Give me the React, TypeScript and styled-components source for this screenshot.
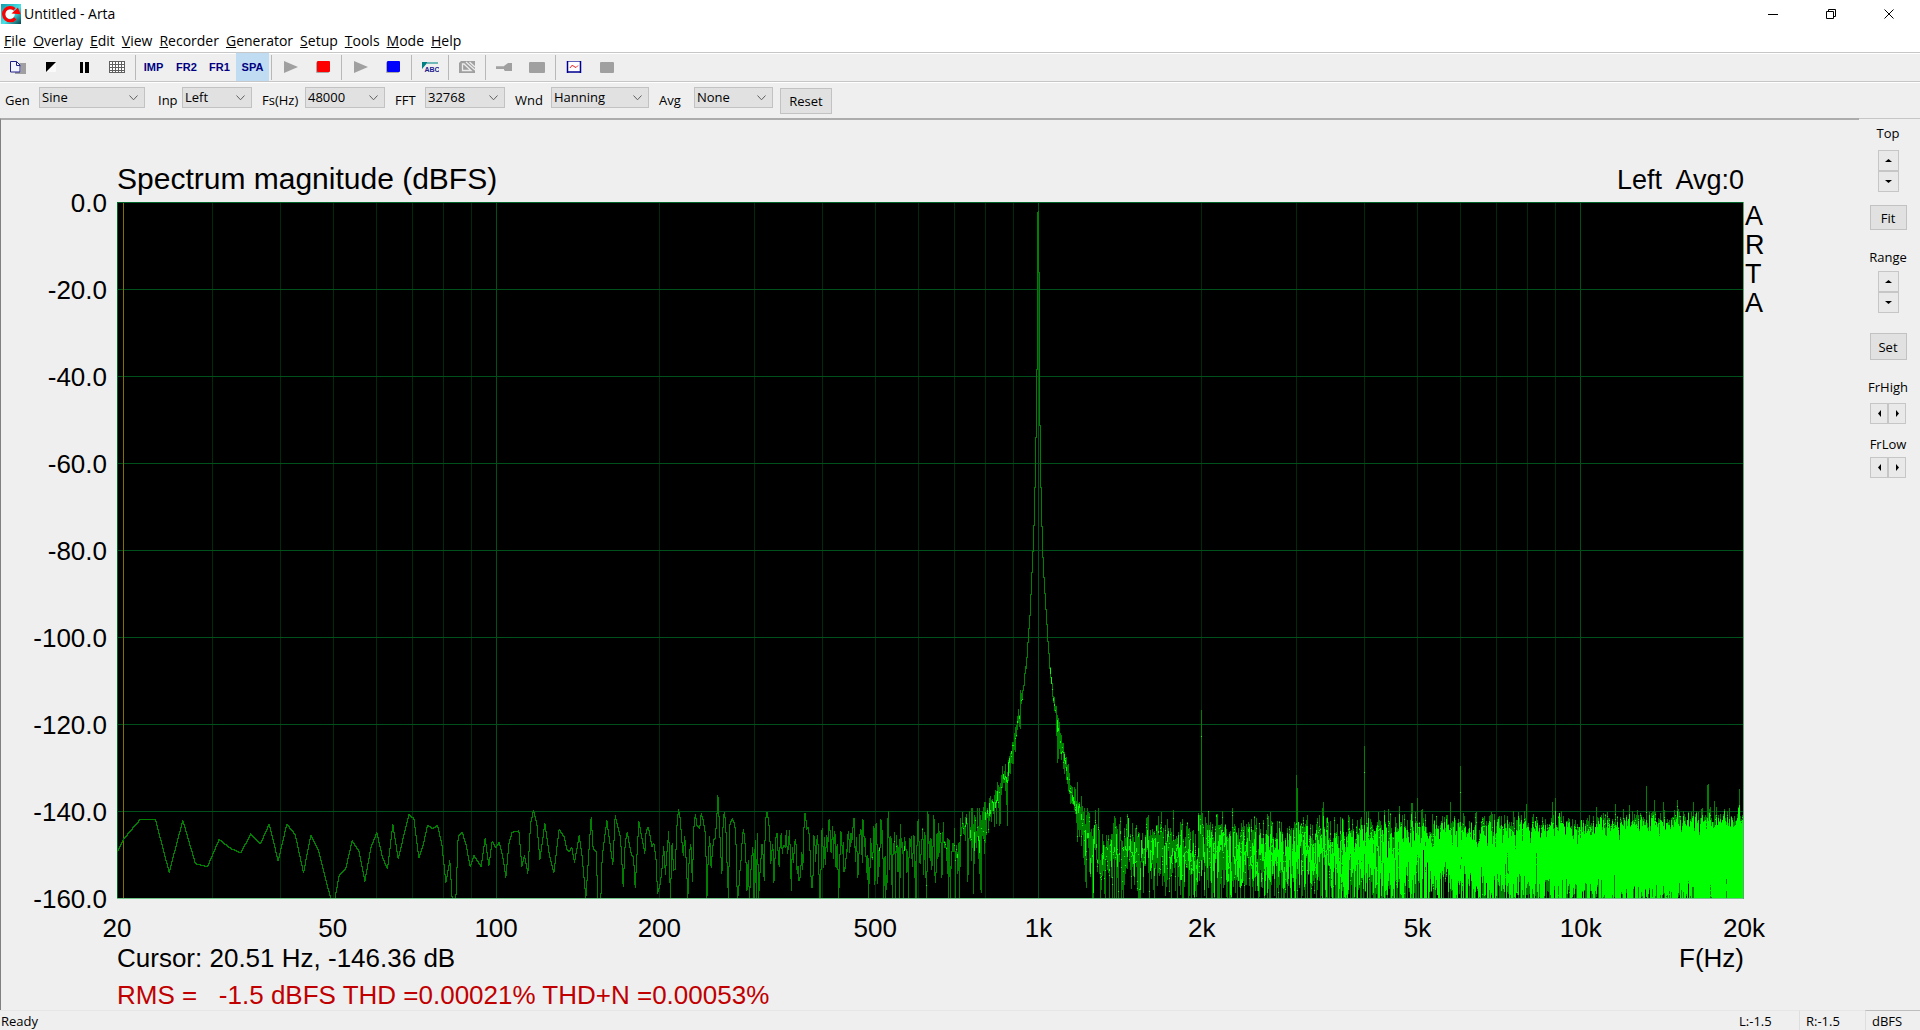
import React, { useMemo } from "react";
import styled, { createGlobalStyle } from "styled-components";

const GlobalStyle = createGlobalStyle`
  * { box-sizing: border-box; }
  html, body { margin: 0; padding: 0; }
  body {
    background: #efefef;
    color: #000;
    font-family: "Open Sans", "Noto Sans", sans-serif;
    font-size: 14px;
  }
  button, select { font: inherit; color: inherit; }
`;

/* ---------- window frame ---------- */

const Window = styled.div`
  display: flex;
  flex-direction: column;
  min-height: 100vh;
`;

const TitleBar = styled.header`
  display: flex;
  align-items: flex-start;
  justify-content: space-between;
  height: 30px;
  padding-right: 2px;
  background: #fff;
`;

const Caption = styled.h1`
  display: flex;
  align-items: center;
  gap: 3px;
  margin: 0;
  padding: 4px 0 0 1px;
  font-size: 14px;
  line-height: 20px;
  font-weight: 400;
`;

const WindowButtons = styled.div`
  display: flex;
`;

const WindowButton = styled.button`
  display: grid;
  place-items: center;
  width: 58px;
  height: 27px;
  padding: 0;
  border: 0;
  background: transparent;
`;

const MenuBar = styled.nav`
  display: flex;
  gap: 7px;
  height: 22px;
  padding-left: 4px;
  background: #fff;
`;

const MenuItem = styled.button`
  padding: 0;
  border: 0;
  background: transparent;
  font-size: 14px;
  line-height: 22px;

  &::first-letter { text-decoration: underline; }
`;

/* ---------- toolbars ---------- */

const ToolBar = styled.div`
  display: flex;
  height: 30px;
  padding-left: 1px;
  border-top: 1px solid #c6c6c6;
  border-bottom: 1px solid #c6c6c6;
  box-shadow: inset 0 1px 0 #fff, 0 1px 0 #fff;
`;

const ToolButton = styled.button<{ $active?: boolean }>`
  display: grid;
  place-items: center;
  width: 33px;
  padding: 0;
  border: 0;
  background: ${(p) => (p.$active ? "#bfdcf3" : "transparent")};
  color: #000080;
  font-family: "Liberation Sans", Arial, sans-serif;
  font-size: 11px;
  font-weight: 700;
`;

const ToolSeparator = styled.span`
  width: 1px;
  margin: 2px 1px 1px 2px;
  background: #b8b8b8;
`;

const SettingsBar = styled.form`
  display: flex;
  align-items: flex-start;
  height: 36px;
  padding-top: 5px;
`;

const FieldLabel = styled.label<{ $width: number; $inset?: number }>`
  width: ${(p) => p.$width}px;
  padding-top: 3px;
  padding-left: ${(p) => p.$inset ?? 10}px;
  font-size: 13px;
  line-height: 20px;
  white-space: nowrap;
`;

const SelectBox = styled.span<{ $width: number }>`
  position: relative;
  width: ${(p) => p.$width}px;
  height: 21px;

  svg {
    position: absolute;
    right: 7px;
    top: 8px;
    pointer-events: none;
  }
`;

const Select = styled.select`
  appearance: none;
  display: block;
  width: 100%;
  height: 21px;
  padding: 0 18px 0 2px;
  border: 1px solid #c2c2c2;
  border-radius: 0;
  background: #e1e1e1;
  font-size: 13px;
  line-height: 19px;
`;

const PushButton = styled.button<{ $width: number; $height: number }>`
  width: ${(p) => p.$width}px;
  height: ${(p) => p.$height}px;
  padding: 0;
  border: 1px solid #c2c2c2;
  background: #e1e1e1;
  font-size: 13px;
`;

const ResetButton = styled(PushButton)`
  margin: 1px 0 0 7px;
`;

/* ---------- body ---------- */

const Body = styled.main`
  display: flex;
  flex: 1;
`;

const View = styled.section`
  display: grid;
  flex: 1;
  grid-template-columns: 116px minmax(0, 1fr) 115px;
  grid-template-rows: 82px minmax(0, 1fr) 44px 30px 37px;
  border-top: 2px solid #acacac;
  border-left: 1px solid #808080;
  font-family: "Liberation Sans", Arial, sans-serif;
  font-size: 26px;
  line-height: 30px;
`;

const ChartHeader = styled.div`
  display: flex;
  grid-column: 2;
  align-items: flex-end;
  justify-content: space-between;
  padding-bottom: 7px;
  font-size: 27px;
  line-height: 30px;
  white-space: pre;
`;

const ChartTitle = styled.h2`
  margin: 0;
  font-size: 30px;
  line-height: 32px;
  font-weight: 400;
`;

const LevelAxis = styled.div`
  display: flex;
  flex-direction: column;
  grid-column: 1;
  grid-row: 2;
  justify-content: space-between;
  padding-right: 10px;
  text-align: right;
`;

const LevelTick = styled.span`
  display: flex;
  align-items: center;
  justify-content: flex-end;
  height: 1px;
`;

const Plot = styled.svg`
  display: block;
  grid-column: 2;
  grid-row: 2;
  width: 100%;
  height: 100%;
  background: #000;
`;

const Brand = styled.div`
  grid-column: 3;
  grid-row: 2;
  width: 24px;
  padding-left: 1px;
  font-size: 27px;
  line-height: 29px;
  word-break: break-all;
`;

const FrequencyAxis = styled.div`
  display: flex;
  grid-column: 2;
  grid-row: 3;
  padding-top: 14px;
`;

const FrequencyTick = styled.span`
  display: flex;
  justify-content: center;
  width: 0;
`;

const Readout = styled.div`
  display: flex;
  grid-column: 2;
  grid-row: 4;
  justify-content: space-between;
`;

const Distortion = styled.div`
  grid-column: 2 / 4;
  grid-row: 5;
  padding-top: 7px;
  color: #c00000;
  white-space: pre;
`;

/* ---------- side panel ---------- */

const SidePanel = styled.aside`
  display: flex;
  flex-direction: column;
  align-items: center;
  width: 61px;
  padding-top: 4px;
  padding-right: 3px;
  border-top: 1px solid #c6c6c6;
  font-size: 13px;
`;

const PanelLabel = styled.span<{ $space: number }>`
  margin-top: ${(p) => p.$space}px;
  line-height: 20px;
`;

const Spinner = styled.div<{ $row?: boolean; $space: number }>`
  display: flex;
  flex-direction: ${(p) => (p.$row ? "row" : "column")};
  margin-top: ${(p) => p.$space}px;
`;

const SpinButton = styled.button<{ $width: number }>`
  display: grid;
  place-items: center;
  width: ${(p) => p.$width}px;
  height: 21px;
  padding: 0;
  border: 1px solid #c6c6c6;
  background: #e9e9e9;
`;

const PanelButton = styled(PushButton)<{ $space: number }>`
  margin-top: ${(p) => p.$space}px;
`;

/* ---------- status bar ---------- */

const StatusBar = styled.footer`
  display: flex;
  height: 20px;
  font-size: 13px;
  line-height: 21px;
`;

const StatusCell = styled.span<{ $width?: number; $strong?: boolean; $rule?: boolean }>`
  flex: ${(p) => (p.$width ? `0 0 ${p.$width}px` : "1")};
  padding-left: ${(p) => (p.$width ? 6 : 1)}px;
  border-top: 1px solid ${(p) => (p.$strong ? "#bdbdbd" : "#e6e6e6")};
  border-left: ${(p) => (p.$rule ? "1px solid #dedede" : "0")};
`;

/* ---------- spectrum ---------- */

const PLOT_W = 1627;
const PLOT_H = 697;
const DECADE = 542;
const BIN_HZ = 48000 / 32768;

const xOf = (hz: number) => DECADE * Math.log10(hz / 20);
const yOf = (db: number) => (-db * (PLOT_H - 1)) / 160;

/* Low end of the trace, in thirds of a pixel, y counted from 598 px. */
const LOW_TRACE: [number, number][] = [
  [0, 152], [20, 114], [67, 58], [114, 58], [155, 215], [196, 60], [234, 190], [270, 199], [305, 117], [340, 144],
  [370, 157], [400, 100], [429, 130], [455, 71], [482, 181], [508, 71], [533, 102], [558, 217], [580, 104], [602, 147],
  [640, 296], [652, 296], [665, 225], [684, 207], [704, 121], [724, 152], [742, 242], [760, 142], [778, 97],
  [795, 170], [810, 205], [826, 72], [842, 175], [874, 43], [889, 54], [904, 172], [918, 130], [930, 75], [946, 84],
  [960, 75], [973, 130], [985, 246], [997, 180], [1004, 296], [1015, 296], [1022, 106], [1034, 95], [1046, 135],
  [1058, 198], [1069, 165], [1091, 198], [1103, 115], [1114, 196], [1124, 122], [1135, 141], [1145, 125], [1156, 170],
  [1165, 230], [1174, 130], [1184, 95], [1204, 91], [1213, 198], [1221, 165], [1231, 218], [1239, 70], [1248, 30],
  [1258, 70], [1267, 178], [1282, 70], [1295, 160], [1309, 216], [1325, 87], [1340, 110], [1348, 145], [1355, 152],
  [1363, 142], [1371, 185], [1385, 106], [1394, 170], [1405, 292], [1421, 50], [1427, 145], [1436, 155], [1441, 296],
  [1450, 296], [1454, 170], [1468, 60], [1486, 192], [1493, 46], [1509, 110], [1517, 258], [1523, 130], [1529, 95],
  [1542, 165], [1548, 168], [1553, 262], [1564, 64], [1582, 158], [1586, 90], [1593, 80], [1603, 138], [1609, 128],
  [1616, 180], [1620, 280],
];

/* Skirt of the fundamental: pixel distance from the carrier, level in dB. */
const SKIRT: [number, number][] = [
  [-80, -160], [-60, -146], [-50, -141], [-40, -136], [-32, -131], [-28, -128.5], [-25, -126], [-23, -123],
  [-20.5, -120.5], [-18, -117], [-15, -112], [-12.5, -106.5], [-11, -103], [-9.5, -98.5], [-8, -94], [-7, -88],
  [-5.7, -82], [-5, -78.5], [-4, -72], [-3, -62], [-2, -50], [-1.2, -36], [-0.6, -3], [0, -1.5], [0.6, -8],
  [1, -38], [2, -58], [3, -69.5], [4, -77], [5, -84], [6, -87.5], [7, -91], [8, -95], [9, -98], [10, -102.5],
  [12, -108], [15, -113.5], [18, -118.5], [21, -122], [26, -128], [31, -133], [36, -137.5], [43, -143], [58, -160],
];

const TONES: [number, number][] = [
  [257, -136.4], [2000, -116.8], [3000, -131.7], [4000, -125], [5000, -137], [6000, -129.7], [5750, -138],
  [7940, -138.5], [8880, -138], [9000, -137], [10720, -139], [13220, -134.3], [13700, -137.5], [14220, -138],
  [16200, -138], [17200, -133.8], [17700, -137.6], [19700, -135],
];

function skirtLevel(dx: number): number {
  if (dx <= SKIRT[0][0] || dx >= SKIRT[SKIRT.length - 1][0]) return -200;
  for (let i = 1; i < SKIRT.length; i++) {
    const [x1, a] = SKIRT[i - 1];
    const [x2, b] = SKIRT[i];
    if (dx <= x2) return a + ((b - a) * (dx - x1)) / (x2 - x1);
  }
  return -200;
}

function makeRandom(seed: number) {
  let s = seed;
  return () => {
    s = (s + 0x6d2b79f5) | 0;
    let t = Math.imul(s ^ (s >>> 15), 1 | s);
    t = (t + Math.imul(t ^ (t >>> 7), 61 | t)) ^ t;
    return ((t ^ (t >>> 14)) >>> 0) / 4294967296;
  };
}

function buildPoints(): [number, number][] {
  const random = makeRandom(20480);
  const gauss = () => Math.sqrt(-2 * Math.log(random() + 1e-12)) * Math.cos(2 * Math.PI * random());
  const pts: [number, number][] = LOW_TRACE.map(([x, y]) => [x / 3, 598 + y / 3]);
  const first = 137;
  const last = Math.floor(20000 / BIN_HZ) + 1;
  const re: number[] = [];
  const im: number[] = [];
  for (let i = 0; i <= last + 2; i++) {
    re.push(gauss());
    im.push(gauss());
  }
  const noise = Math.pow(10, -147.6 / 20) / Math.sqrt(3);
  const carrier = xOf(1000);
  for (let k = first; k <= last; k++) {
    const hz = k * BIN_HZ;
    const nr = (re[k] - 0.5 * (re[k - 1] + re[k + 1])) * noise;
    const ni = (im[k] - 0.5 * (im[k - 1] + im[k + 1])) * noise;
    const x = xOf(hz);
    const level = skirtLevel(x - carrier);
    const skirt = Math.pow(10, level / 20);
    const jitter = level < -116 ? 1 + 0.24 * gauss() : level < -100 ? 1 + 0.08 * gauss() : 1;
    let db = 20 * Math.log10(Math.hypot(nr + skirt * jitter, ni) + 1e-12);
    for (const [f, peak] of TONES) {
      const offset = Math.abs(hz - f) / BIN_HZ;
      if (offset <= 0.5) db = peak;
      else if (offset <= 1.5) db = Math.max(db, peak - 6);
    }
    pts.push([x, yOf(Math.max(db, -160))]);
  }
  return pts;
}

/* Rasterises the trace column by column; pixels crossed often enough turn bright. */
function buildTrace() {
  const hits = new Uint16Array(PLOT_W * PLOT_H);
  const pts = buildPoints();
  for (let i = 1; i < pts.length; i++) {
    const [x1, y1] = pts[i - 1];
    const [x2, y2] = pts[i];
    const c1 = Math.max(0, Math.round(x1));
    const c2 = Math.min(PLOT_W - 1, Math.round(x2));
    for (let c = c1; c <= c2; c++) {
      const from = Math.max(x1, c - 0.5);
      const to = Math.min(x2, c + 0.5);
      const span = x2 - x1 || 1;
      const ya = y1 + ((y2 - y1) * (from - x1)) / span;
      const yb = y1 + ((y2 - y1) * (to - x1)) / span;
      const lo = Math.max(0, Math.round(Math.min(ya, yb)));
      const hi = Math.min(PLOT_H - 1, Math.round(Math.max(ya, yb)));
      for (let y = lo; y <= hi; y++) hits[c * PLOT_H + y] += 1;
    }
  }
  let dim = "";
  let bright = "";
  for (let c = 0; c < PLOT_W; c++) {
    let start = 0;
    let state = 0;
    for (let y = 0; y <= PLOT_H; y++) {
      const n = y < PLOT_H ? hits[c * PLOT_H + y] : 0;
      const next = n === 0 ? 0 : n < 3 ? 1 : 2;
      if (next !== state) {
        const piece = `M${c} ${start}h1V${y}h-1z`;
        if (state === 1) dim += piece;
        if (state === 2) bright += piece;
        start = y;
        state = next;
      }
    }
  }
  return { dim, bright };
}

const GRID_HZ = [
  30, 40, 50, 60, 70, 80, 90, 100, 200, 300, 400, 500, 600, 700, 800, 900, 1000, 2000, 3000, 4000, 5000, 6000, 7000,
  8000, 9000, 10000,
];
const MAJOR_HZ = [100, 1000, 10000];
const GRID_DB = [-20, -40, -60, -80, -100, -120, -140];

function SpectrumPlot() {
  const { dim, bright } = useMemo(buildTrace, []);
  return (
    <Plot
      viewBox={`0 0 ${PLOT_W} ${PLOT_H}`}
      preserveAspectRatio="none"
      shapeRendering="crispEdges"
      role="img"
      aria-label="Spectrum magnitude"
    >
      {GRID_HZ.map((hz) => (
        <rect
          key={hz}
          x={Math.round(xOf(hz))}
          y={0}
          width={1}
          height={PLOT_H}
          fill={MAJOR_HZ.includes(hz) ? "#00501c" : "#002a0e"}
        />
      ))}
      {GRID_DB.map((db) => (
        <rect key={db} x={0} y={Math.round(yOf(db))} width={PLOT_W} height={1} fill="#00501c" />
      ))}
      <rect x={6} y={0} width={1} height={PLOT_H} fill="#807000" />
      <rect x={0} y={0} width={PLOT_W} height={1} fill="#006428" />
      <rect x={0} y={0} width={1} height={PLOT_H} fill="#006428" />
      <path d={dim} fill="#008000" />
      <path d={bright} fill="#00ff00" />
      <rect x={0} y={PLOT_H - 1} width={PLOT_W} height={1} fill="#70c488" />
      <rect x={PLOT_W - 1} y={0} width={1} height={PLOT_H} fill="#58a870" />
    </Plot>
  );
}

/* ---------- icons ---------- */

const AppIcon = () => (
  <svg width="20" height="20" viewBox="0 0 20 20" aria-hidden="true">
    <defs>
      <linearGradient id="appIconFill" x1="0" y1="0" x2="1" y2="1">
        <stop offset="0" stopColor="#109ca8" />
        <stop offset="0.55" stopColor="#48e4ea" />
        <stop offset="1" stopColor="#06434c" />
      </linearGradient>
    </defs>
    <rect width="20" height="20" fill="url(#appIconFill)" />
    <circle cx="9" cy="10" r="4.8" fill="#f4ffff" />
    <path d="M14.3 14.4A6.6 6.6 0 1 1 13.6 5.2" fill="none" stroke="#f00" strokeWidth="3.2" />
    <path d="M10.5 9.6L19.6 10.2L17 3.4z" fill="#f00" />
  </svg>
);

const Chevron = () => (
  <svg width="9" height="6" viewBox="0 0 9 6" aria-hidden="true">
    <path d="M0.5 0.5L4.5 4.8L8.5 0.5" fill="none" stroke="#606060" strokeWidth="1" />
  </svg>
);

const Arrow = ({ dir }: { dir: "up" | "down" | "left" | "right" }) => {
  const shapes = {
    up: "M1 6h7L4.5 3z",
    down: "M1 3h7L4.5 6z",
    left: "M6 1v7L3 4.5z",
    right: "M3 1v7L6 4.5z",
  };
  return (
    <svg width="9" height="9" viewBox="0 0 9 9" aria-hidden="true">
      <path d={shapes[dir]} fill="#000" />
    </svg>
  );
};

const Icon = ({ children }: { children: React.ReactNode }) => (
  <svg width="18" height="14" viewBox="0 0 18 14" aria-hidden="true">
    {children}
  </svg>
);

const CopyIcon = () => (
  <Icon>
    <path d="M10 3h7v11H6v-2h6V7z" fill="#a0a0a0" />
    <path d="M1.5 1.500h6l3.500 3.500v7h-9.500z" fill="#f4f4ff" stroke="#202088" />
    <path d="M7.500 1.500V5.500h3.500" fill="none" stroke="#202088" />
  </Icon>
);
const ContrastIcon = () => (
  <Icon>
    <path d="M14 2v10H4z" fill="#fafafa" />
    <path d="M4 2h10L4 12z" fill="#000" />
  </Icon>
);
const PauseIcon = () => (
  <Icon>
    <path d="M5 2h3v11H5zM10 2h4v11h-4z" fill="#000" />
  </Icon>
);
const GridIcon = () => (
  <Icon>
    <path
      d="M1.5 1.5h15v11h-15zM4.5 1.5v11M7.5 1.5v11M10.5 1.5v11M13.5 1.5v11M1.5 4.5h15M1.5 7.5h15M1.5 10.5h15"
      fill="#fff"
      stroke="#606060"
      shapeRendering="crispEdges"
    />
  </Icon>
);
const PlayIcon = () => (
  <Icon>
    <path d="M3 1l14 6l-14 6z" fill="#a0a0a0" />
  </Icon>
);
const StopIcon = ({ color }: { color: string }) => (
  <Icon>
    <rect x="2" y="2" width="13" height="11" rx="1" fill="#a8a8a8" />
    <rect x="3" y="1" width="13" height="11" rx="1" fill={color} />
  </Icon>
);
const LabelIcon = () => (
  <Icon>
    <path d="M1 2h6L1 9z" fill="#008080" />
    <path d="M7 2h10v2H5z" fill="#70b8b8" />
    <text x="3.5" y="12" fontFamily="Liberation Sans, Arial, sans-serif" fontSize="7" fontWeight="700" fill="#202090">
      ABC
    </text>
  </Icon>
);
const HatchIcon = () => (
  <Icon>
    <path d="M3 1h14v12H1V3z" fill="#a0a0a0" />
    <path d="M8 2l9 8M11.500 2l5.500 5" fill="none" stroke="#ececec" strokeWidth="1.300" />
    <path d="M4.500 4v6.500h8.500L6 4z" fill="none" stroke="#ececec" strokeWidth="1.300" />
  </Icon>
);
const KeyIcon = () => (
  <Icon>
    <path d="M1 6h10v3H1z" fill="#b4b4b4" />
    <path d="M9 6l4-3h4v8h-7l-1-1z" fill="#a0a0a0" />
    <path d="M1 8h8" stroke="#909090" />
  </Icon>
);
const BlockIcon = ({ width }: { width: number }) => (
  <Icon>
    <rect x={Math.round((18 - width) / 2)} y="2" width={width} height="11" rx="1" fill="#a0a0a0" />
  </Icon>
);
const ChartIcon = () => (
  <Icon>
    <rect x="2" y="2" width="14" height="10" fill="#fff" />
    <path d="M2 1.500h14" stroke="#6060b8" />
    <path d="M2.500 1v12M15.500 1v12M2 12h14" fill="none" stroke="#000090" strokeWidth="1.500" />
    <path d="M5 8q2-4 4-1.500t4-1" fill="none" stroke="#f02020" />
  </Icon>
);

/* ---------- data ---------- */

const MENUS = ["File", "Overlay", "Edit", "View", "Recorder", "Generator", "Setup", "Tools", "Mode", "Help"];

type Tool = { name: string; icon?: React.ReactNode; active?: boolean };
const TOOL_GROUPS: Tool[][] = [
  [
    { name: "Copy", icon: <CopyIcon /> },
    { name: "Black and white", icon: <ContrastIcon /> },
    { name: "Line width", icon: <PauseIcon /> },
    { name: "Grid", icon: <GridIcon /> },
  ],
  [{ name: "IMP" }, { name: "FR2" }, { name: "FR1" }, { name: "SPA", active: true }],
  [
    { name: "Record", icon: <PlayIcon /> },
    { name: "Stop record", icon: <StopIcon color="#ff0000" /> },
  ],
  [
    { name: "Generate", icon: <PlayIcon /> },
    { name: "Stop generator", icon: <StopIcon color="#0000ff" /> },
  ],
  [{ name: "Label", icon: <LabelIcon /> }],
  [{ name: "Overlay", icon: <HatchIcon /> }],
  [
    { name: "Calibrate", icon: <KeyIcon /> },
    { name: "Compensate", icon: <BlockIcon width={16} /> },
  ],
  [
    { name: "Chart", icon: <ChartIcon /> },
    { name: "Panel", icon: <BlockIcon width={14} /> },
  ],
];

const FIELDS = [
  { id: "gen", label: "Gen", value: "Sine", labelWidth: 39, width: 106, inset: 5 },
  { id: "inp", label: "Inp", value: "Left", labelWidth: 37, width: 70, inset: 13 },
  { id: "fs", label: "Fs(Hz)", value: "48000", labelWidth: 53, width: 80 },
  { id: "fft", label: "FFT", value: "32768", labelWidth: 40, width: 80 },
  { id: "wnd", label: "Wnd", value: "Hanning", labelWidth: 46, width: 98 },
  { id: "avg", label: "Avg", value: "None", labelWidth: 45, width: 79 },
];

const LEVELS = ["0.0", "-20.0", "-40.0", "-60.0", "-80.0", "-100.0", "-120.0", "-140.0", "-160.0"];

const FREQUENCIES: [number, string][] = [
  [20, "20"], [50, "50"], [100, "100"], [200, "200"], [500, "500"],
  [1000, "1k"], [2000, "2k"], [5000, "5k"], [10000, "10k"], [20000, "20k"],
];

export default function App() {
  return (
    <Window>
      <GlobalStyle />
      <TitleBar>
        <Caption>
          <AppIcon />
          Untitled - Arta
        </Caption>
        <WindowButtons>
          <WindowButton aria-label="Minimize">
            <svg width="12" height="12" viewBox="0 0 12 12">
              <path d="M1 6.5h10" stroke="#000" />
            </svg>
          </WindowButton>
          <WindowButton aria-label="Restore">
            <svg width="12" height="12" viewBox="0 0 12 12">
              <path d="M1.500 3.500h7v7h-7zM3.500 3.500v-2h7v7h-2" fill="none" stroke="#000" />
            </svg>
          </WindowButton>
          <WindowButton aria-label="Close">
            <svg width="12" height="12" viewBox="0 0 12 12">
              <path d="M1.500 1.500l9 9M10.500 1.500l-9 9" stroke="#000" />
            </svg>
          </WindowButton>
        </WindowButtons>
      </TitleBar>
      <MenuBar>
        {MENUS.map((name) => (
          <MenuItem key={name}>{name}</MenuItem>
        ))}
      </MenuBar>
      <ToolBar>
        {TOOL_GROUPS.map((group, i) => (
          <React.Fragment key={i}>
            {i > 0 && <ToolSeparator />}
            {group.map((tool) => (
              <ToolButton key={tool.name} $active={tool.active} aria-label={tool.name}>
                {tool.icon ?? tool.name}
              </ToolButton>
            ))}
          </React.Fragment>
        ))}
      </ToolBar>
      <SettingsBar onSubmit={(e) => e.preventDefault()}>
        {FIELDS.map((f) => (
          <React.Fragment key={f.id}>
            <FieldLabel htmlFor={f.id} $width={f.labelWidth} $inset={f.inset}>
              {f.label}
            </FieldLabel>
            <SelectBox $width={f.width}>
              <Select id={f.id} defaultValue={f.value}>
                <option>{f.value}</option>
              </Select>
              <Chevron />
            </SelectBox>
          </React.Fragment>
        ))}
        <ResetButton type="button" $width={52} $height={26}>
          Reset
        </ResetButton>
      </SettingsBar>
      <Body>
        <View>
          <ChartHeader>
            <ChartTitle>Spectrum magnitude (dBFS)</ChartTitle>
            <span>{"Left  Avg:0"}</span>
          </ChartHeader>
          <LevelAxis>
            {LEVELS.map((level) => (
              <LevelTick key={level}>{level}</LevelTick>
            ))}
          </LevelAxis>
          <SpectrumPlot />
          <Brand>ARTA</Brand>
          <FrequencyAxis>
            {FREQUENCIES.map(([hz, text], i) => (
              <React.Fragment key={hz}>
                {i > 0 && <span style={{ flexGrow: Math.log10(hz / FREQUENCIES[i - 1][0]) }} />}
                <FrequencyTick>{text}</FrequencyTick>
              </React.Fragment>
            ))}
          </FrequencyAxis>
          <Readout>
            <span>Cursor: 20.51 Hz, -146.36 dB</span>
            <span>F(Hz)</span>
          </Readout>
          <Distortion>{"RMS =   -1.5 dBFS THD =0.00021% THD+N =0.00053%"}</Distortion>
        </View>
        <SidePanel>
          <PanelLabel $space={0}>Top</PanelLabel>
          <Spinner $space={7}>
            <SpinButton $width={21} aria-label="Top up"><Arrow dir="up" /></SpinButton>
            <SpinButton $width={21} aria-label="Top down"><Arrow dir="down" /></SpinButton>
          </Spinner>
          <PanelButton $width={37} $height={25} $space={13}>Fit</PanelButton>
          <PanelLabel $space={17}>Range</PanelLabel>
          <Spinner $space={4}>
            <SpinButton $width={21} aria-label="Range up"><Arrow dir="up" /></SpinButton>
            <SpinButton $width={21} aria-label="Range down"><Arrow dir="down" /></SpinButton>
          </Spinner>
          <PanelButton $width={37} $height={27} $space={20}>Set</PanelButton>
          <PanelLabel $space={17}>FrHigh</PanelLabel>
          <Spinner $row $space={6}>
            <SpinButton $width={18} aria-label="High limit down"><Arrow dir="left" /></SpinButton>
            <SpinButton $width={18} aria-label="High limit up"><Arrow dir="right" /></SpinButton>
          </Spinner>
          <PanelLabel $space={10}>FrLow</PanelLabel>
          <Spinner $row $space={3}>
            <SpinButton $width={18} aria-label="Low limit down"><Arrow dir="left" /></SpinButton>
            <SpinButton $width={18} aria-label="Low limit up"><Arrow dir="right" /></SpinButton>
          </Spinner>
        </SidePanel>
      </Body>
      <StatusBar>
        <StatusCell>Ready</StatusCell>
        <StatusCell $width={66}>L:-1.5</StatusCell>
        <StatusCell $width={66} $rule>R:-1.5</StatusCell>
        <StatusCell $width={55} $rule $strong>dBFS</StatusCell>
      </StatusBar>
    </Window>
  );
}
